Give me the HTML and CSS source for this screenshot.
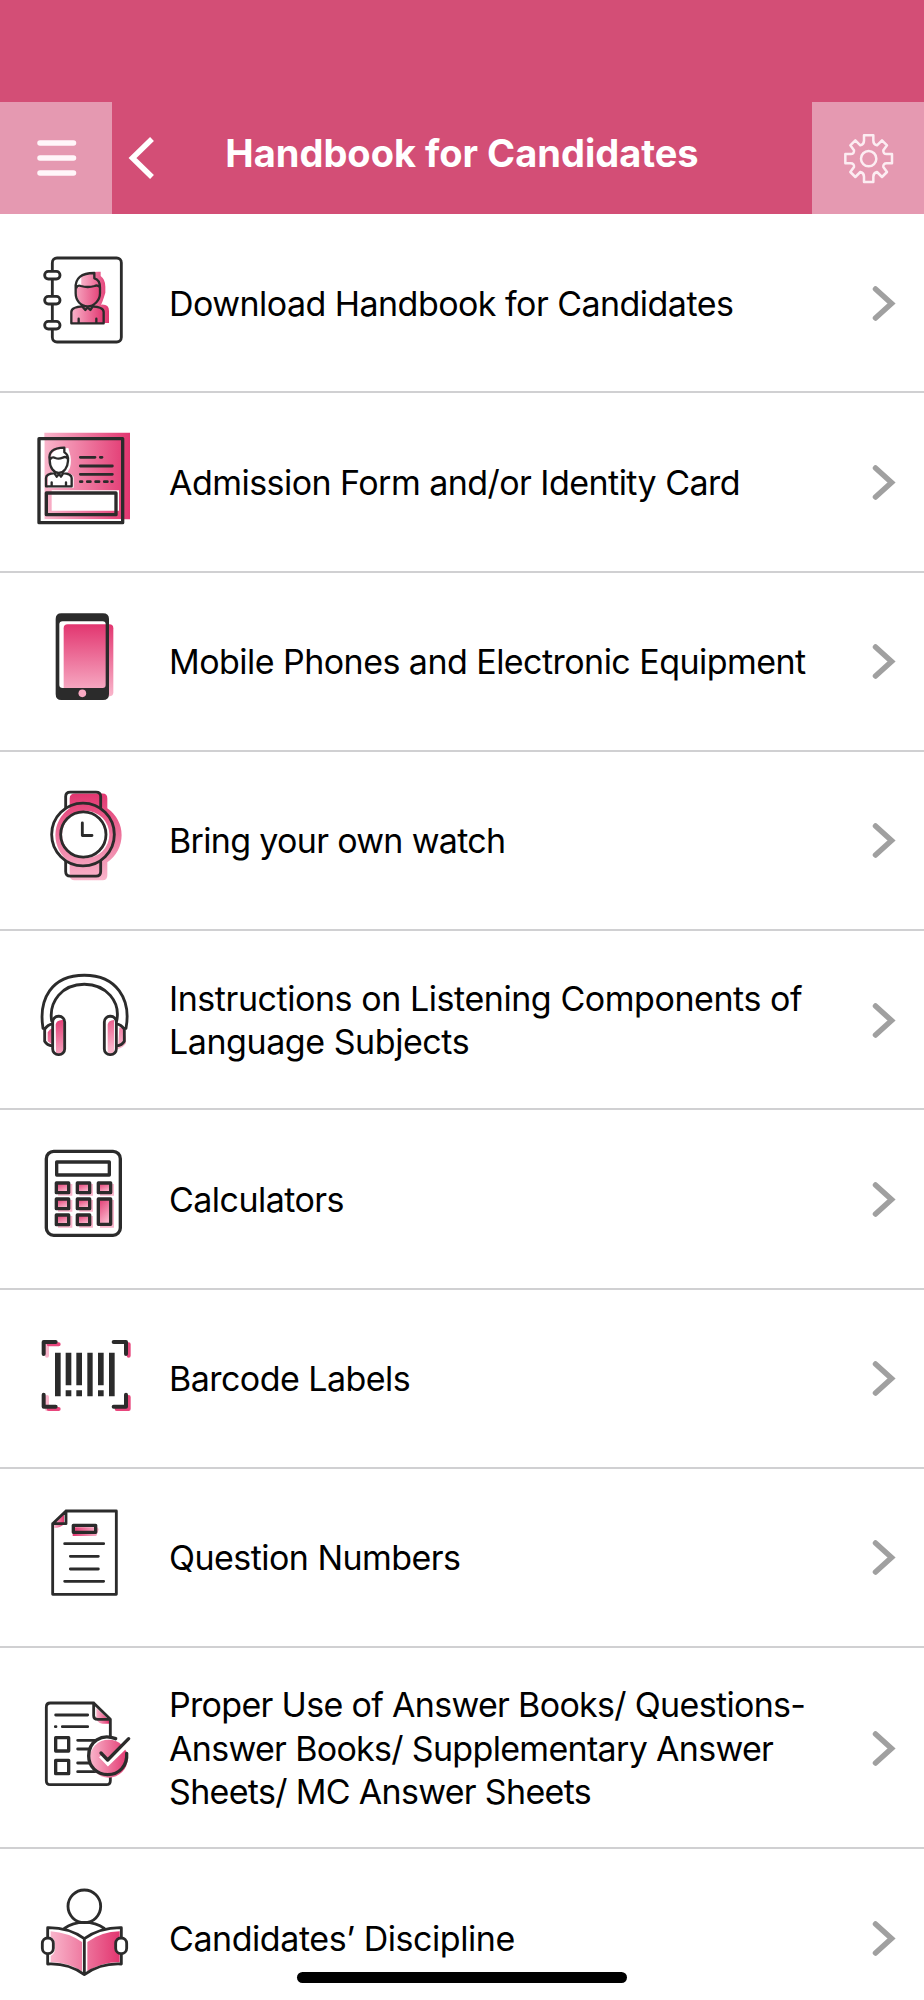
FILE: index.html
```html
<!DOCTYPE html>
<html lang="en">
<head>
<meta charset="utf-8">
<title>Handbook for Candidates</title>
<link rel="stylesheet" href="styles.css">
</head>
<body>
<svg class="defs" width="0" height="0" aria-hidden="true">
  <defs>
    <linearGradient id="h"><stop offset="0" stop-color="#f9b5cb"/><stop offset="1" stop-color="#e23670"/></linearGradient>
    <linearGradient id="v" x1="0" y1="0" x2="0" y2="1"><stop offset="0" stop-color="#e23670"/><stop offset="1" stop-color="#f9b5cb"/></linearGradient>
    <linearGradient id="d" x1="0" y1="0" x2=".5" y2="1"><stop offset="0" stop-color="#e23670"/><stop offset="1" stop-color="#f9b5cb"/></linearGradient>
    <symbol id="chevron" viewBox="0 0 24 36"><path d="M3.500 4L19.500 18.500L3.500 33" fill="none" stroke="#a0a0a0" stroke-width="5.500" stroke-linecap="round" stroke-linejoin="miter"/></symbol>
  </defs>
</svg>
<div class="screen">
  <header class="header">
    <button class="side" aria-label="Menu"><svg width="112" height="112" viewBox="0 0 112 112"><path class="menu-lines" d="M40 41H73.500M40 56H73.500M40 71H73.500"/></svg></button>
    <button class="back" aria-label="Back"><svg width="28" height="44" viewBox="0 0 28 44"><path d="M24 3L4.500 22L24 41" fill="none" stroke="#fff" stroke-width="5.500"/></svg></button>
    <h1 class="title">Handbook for Candidates</h1>
    <button class="side" aria-label="Settings"><svg width="112" height="112" viewBox="0 0 336 336"><g fill="none" stroke="#fcedf2" stroke-width="7.500" stroke-linejoin="round" transform="translate(170 170)"><circle r="23"/><path d="M-14 -70H14V-54Q14 -43 25 -40L40 -55L55 -40L44 -25Q43 -14 54 -14H70V14H54Q43 14 44 25L55 40L40 55L25 40Q14 43 14 54V70H-14V54Q-14 43 -25 40L-40 55L-55 40L-44 25Q-43 14 -54 14H-70V-14H-54Q-43 -14 -44 -25L-55 -40L-40 -55L-25 -40Q-14 -43 -14 -54Z"/></g></svg></button>
  </header>
  <main class="list">
    <a class="row">
      <svg class="icon" viewBox="0 0 390 360">
        <path d="M184 105Q200 94 242 95V108Q256 118 256 140V158Q247 188 243 194Q267 192 267 213V249H182Z" fill="url(#h)"/>
        <path d="M168 143Q203 132 239 142V165Q230 198 202 197Q177 194 169 165ZM154 213Q155 202 188 198H225Q251 200 251 215V250H154Z" fill="url(#h)"/>
        <rect class="ink" x="97" y="54" width="207" height="252" rx="14"/>
        <g class="ink white"><rect x="74" y="94" width="46" height="23" rx="11"/><rect x="74" y="169" width="46" height="23" rx="11"/><rect x="74" y="244" width="46" height="23" rx="11"/></g>
        <path class="ink mid" d="M167 145Q164 99 223 99V115Q240 119 240 143V160C240 181 222 199 203 199C182 199 167 181 167 160ZM169 143Q173 134 183 138Q203 144 224 138Q232 134 239 141M190 199Q154 200 154 216V250H251V216Q251 200 214 199M188 201L196 210L203 202L211 210L218 200M176 250V236M229 250V236"/>
      </svg>
      <span class="label">Download Handbook for Candidates</span>
      <svg class="go"><use href="#chevron"/></svg>
    </a>
    <a class="row">
      <svg class="icon" viewBox="0 -2 390 360">
        <path d="M73 39H330V299H73Z" fill="url(#h)"/>
        <path d="M59 59H73V306H306V299H59Z" fill="#fff"/>
        <path d="M84 204V170Q85 162 98 158Q90 145 93 112Q93 91 125 87L145 85L149 100Q156 120 150 144L142 159Q158 163 161 172V204Z" fill="#fff"/>
        <path d="M95 212H297V273H95Z" fill="#fff"/>
        <rect class="ink thick" x="57" y="57" width="251" height="252"/>
        <rect class="ink thick" x="79" y="220" width="209" height="65"/>
        <path class="ink mid" d="M89 121Q82 85 133 84V98Q146 105 144 124C143 144 132 159 116 160C101 159 89 144 89 121ZM91 118Q97 110 106 115Q116 119 128 114Q138 109 144 118M105 160Q78 162 78 175V200H155V175Q155 162 128 160M104 162L110 171L117 163L123 171L129 162M95 200V188M138 200V188"/>
        <path class="ink" d="M181 113H225M241 113H246M181 139H277M181 164H277M181 186H186M202 186H211M227 186H237M253 186H262M275 186H277"/>
      </svg>
      <span class="label">Admission Form and/or Identity Card</span>
      <svg class="go"><use href="#chevron"/></svg>
    </a>
    <a class="row">
      <svg class="icon" viewBox="0 -4 390 360">
        <rect x="131" y="72" width="149" height="216" rx="12" fill="url(#v)"/>
        <path fill="#2b2b2b" fill-rule="evenodd" d="M124 39H249Q267 39 267 56V281Q267 299 249 299H124Q107 299 107 281V56Q107 39 124 39ZM128 63Q118 63 118 72V254Q118 263 128 263H248Q257 263 257 254V72Q257 63 248 63Z"/>
        <circle cx="187" cy="279" r="11.500" fill="#f9a9c3"/>
      </svg>
      <span class="label">Mobile Phones and Electronic Equipment</span>
      <svg class="go"><use href="#chevron"/></svg>
    </a>
    <a class="row">
      <svg class="icon" viewBox="0 -6.500 390 360">
        <path d="M166 40H248Q262 40 262 55V84A98 98 0 0 1 262 246V285Q262 300 248 300H164Q149 300 149 285V246A98 98 0 0 1 149 84V55Q149 40 166 40Z" fill="url(#v)"/>
        <circle cx="197" cy="163" r="71" fill="#fff"/>
        <circle cx="189" cy="163" r="94" class="ink"/>
        <circle cx="190" cy="163" r="68" class="ink"/>
        <path class="ink" d="M137 83V49Q137 36 151 36H228Q242 36 242 49V83M137 243V274Q137 288 151 288H228Q242 288 242 274V243M187 128V166H216"/>
      </svg>
      <span class="label tighter">Bring your own watch</span>
      <svg class="go"><use href="#chevron"/></svg>
    </a>
    <a class="row">
      <svg class="icon" viewBox="0 -8.700 390 360">
        <path d="M83 217Q90 206 97 205V254L83 244ZM107 194Q109 181 126 180H131V275Q124 284 108 280ZM263 194Q265 181 282 180V281Q269 286 263 276ZM298 203H306Q318 220 318 250Q311 262 294 267Z" fill="url(#d)"/>
        <path class="ink" d="M69 205C55 118 94 46 193 46C290 46 334 118 318 205M95 183C86 125 126 73 193 73C259 73 302 126 290 183M97 192Q84 194 74 208V244Q81 256 97 258M290 192Q303 194 313 208V244Q306 256 290 258"/>
        <rect class="ink" x="98" y="169" width="36" height="115" rx="17"/><rect class="ink" x="253" y="169" width="36" height="115" rx="17"/>
      </svg>
      <span class="label looser">Instructions on Listening Components of<br>Language Subjects</span>
      <svg class="go"><use href="#chevron"/></svg>
    </a>
    <a class="row">
      <svg class="icon" viewBox="0 -11 390 360">
        <g fill="#f9b5cb"><path d="M114 133H157V168H114ZM178 133H219V168H178ZM240 133H282V168H240ZM114 181H157V216H114ZM178 181H219V216H178ZM240 181H282V264H240ZM114 229H157V264H114ZM178 229H219V264H178Z"/></g>
        <rect class="ink thick" x="79" y="35" width="222" height="252" rx="22"/>
        <rect class="ink thick" x="110" y="67" width="158" height="39"/>
        <g class="ink thick"><g fill="url(#d)"><rect x="109" y="130" width="37" height="29"/><rect x="172" y="130" width="37" height="29"/><rect x="235" y="130" width="37" height="29"/><rect x="109" y="178" width="37" height="29"/><rect x="172" y="178" width="37" height="29"/><rect x="235" y="178" width="37" height="76"/><rect x="109" y="226" width="37" height="29"/><rect x="172" y="226" width="37" height="29"/></g></g>
      </svg>
      <span class="label">Calculators</span>
      <svg class="go"><use href="#chevron"/></svg>
    </a>
    <a class="row">
      <svg class="icon" viewBox="0 -13 390 360">
        <g fill="none" stroke-width="12" stroke-linecap="round" stroke-linejoin="round"><path d="M81 106V72M81 266V230" stroke="#f9b5cb"/><path d="M86 72H116M86 266H116M326 72V106M290 266H326V230" stroke="#e8467c"/></g>
        <path d="M71 101V65H107M281 65H318V101M71 223V259H107M281 259H318V223" fill="none" stroke="#2b2b2b" stroke-width="12" stroke-linecap="round" stroke-linejoin="round"/>
        <path fill="#2b2b2b" d="M105 97H122V228H105ZM137 97H154V195H137ZM137 210H154V228H137ZM169 97H186V195H169ZM169 210H186V228H169ZM202 97H218V228H202ZM234 97H251V195H234ZM234 210H251V228H234ZM267 97H284V228H267Z"/>
      </svg>
      <span class="label">Barcode Labels</span>
      <svg class="go"><use href="#chevron"/></svg>
    </a>
    <a class="row">
      <svg class="icon" viewBox="0 -15 390 360">
        <path d="M103 70L132 42V73Q121 84 103 84Z" fill="url(#h)"/><path d="M165 82H236V108H165Q158 108 158 101Z" fill="url(#h)" transform="rotate(180 197 95)"/>
        <path class="ink" d="M98 71L138 33H289V283H98ZM98 71H138V33"/>
        <rect x="160" y="76" width="67" height="21" class="ink thick"/>
        <path class="ink" d="M134 131H251M151 169H235M151 207H235M134 244H251"/>
      </svg>
      <span class="label">Question Numbers</span>
      <svg class="go"><use href="#chevron"/></svg>
    </a>
    <a class="row tall">
      <svg class="icon" viewBox="0 -47 390 360">
        <path d="M229 55L267 91V102H247Q229 98 229 84Z" fill="url(#h)"/>
        <path class="ink" d="M271 143V89L221 40H91Q79 40 79 52V273Q79 285 91 285H259Q271 285 271 273V257M221 40V78Q221 89 233 89H271M107 76H203M106 111H108M127 111H203M173 152H226M173 178H209M173 220H211M173 246H231"/>
        <path class="ink thick" d="M107 144H146V184H107ZM107 212H146V252H107Z"/>
        <circle cx="266" cy="207" r="57" fill="url(#h)"/>
        <path d="M286 149Q304 157 315 174L323 189L330 150L315 137Z" fill="#fff"/>
        <path d="M243 197L264 219L327 158" fill="none" stroke="#fff" stroke-width="16"/>
        <path class="ink thick" d="M287 147C244 130 206 156 206 199C206 230 230 254 263 255C298 255 323 227 320 191M243 190L263 211L326 147"/>
      </svg>
      <span class="label tighter">Proper Use of Answer Books/ Questions-<br>Answer Books/ Supplementary Answer<br>Sheets/ MC Answer Sheets</span>
      <svg class="go"><use href="#chevron"/></svg>
    </a>
    <a class="row">
      <svg class="icon" viewBox="0 -15 390 360">
        <path d="M92 154Q145 158 186 186V274Q145 247 92 247V228Q108 220 105 194Q106 178 92 171ZM202 186Q245 155 299 154V174Q285 181 286 200Q286 216 299 222V247Q247 246 202 274Z" fill="url(#h)"/>
        <circle class="ink" cx="193" cy="79" r="49"/>
        <path class="ink" d="M133 145Q158 127 193 127Q228 127 253 145M83 173V143Q146 142 193 176Q241 142 304 143V173M83 221V252Q146 249 193 284Q241 249 304 252V221M193 176V284"/>
        <rect class="ink white" x="67" y="174" width="33" height="47" rx="16"/><rect class="ink white" x="287" y="174" width="33" height="47" rx="16"/>
      </svg>
      <span class="label looser">Candidates’ Discipline</span>
      <svg class="go"><use href="#chevron"/></svg>
    </a>
  </main>
  <div class="home-indicator"></div>
</div>
</body>
</html>
```
FILE: styles.css
```css
* { box-sizing: border-box; }
body { margin: 0; background: #fff; font-family: Inter, "Liberation Sans", sans-serif; color: #000; }
.defs { position: absolute; }
.screen { position: relative; height: 2000px; overflow: hidden; }
.header { height: 214px; padding-top: 102px; display: grid; grid-template-columns: 112px 60px 1fr 60px 112px; background: #d34e76; }
.header button { border: 0; padding: 0; background: none; }
.header .side { background: #e599b1; height: 112px; }
.header .side:last-child { grid-column: 5; }
.side svg { display: block; }
.menu-lines { fill: none; stroke: #fff6f9; stroke-width: 5.5; stroke-linecap: round; }
.header .back { display: flex; align-items: center; padding-left: 16px; }
.title { margin: 0; padding-top: 27px; font-size: 38px; line-height: 48px; font-weight: 700; color: #fff; text-align: center; white-space: nowrap; letter-spacing: 0; }
.row { height: 179.28px; display: grid; grid-template-columns: 130px 1fr 54px; padding-left: 20px; align-items: center; border-bottom: 2px solid #d0d0d2; }
.row.tall { height: 201px; }
.icon { width: 130px; height: 120px; align-self: start; margin-top: 26px; overflow: visible; }
.label { padding: 1px 0 0 19px; font-size: 34px; line-height: 43.2px; white-space: nowrap; letter-spacing: -0.54px; }
.label.tighter { letter-spacing: -0.68px; }
.label.looser { letter-spacing: -0.44px; }
.go { width: 24px; height: 36px; margin-left: 2px; }
.row .go { justify-self: start; }
.ink { fill: none; stroke: #2b2b2b; stroke-width: 8.5; stroke-linecap: round; stroke-linejoin: round; }
.ink.mid { stroke-width: 7; }
.ink.thick { stroke-width: 10; }
.ink.white { fill: #fff; }
.home-indicator { position: absolute; left: 297px; top: 1972px; width: 330px; height: 11px; border-radius: 6px; background: #000; }
```
